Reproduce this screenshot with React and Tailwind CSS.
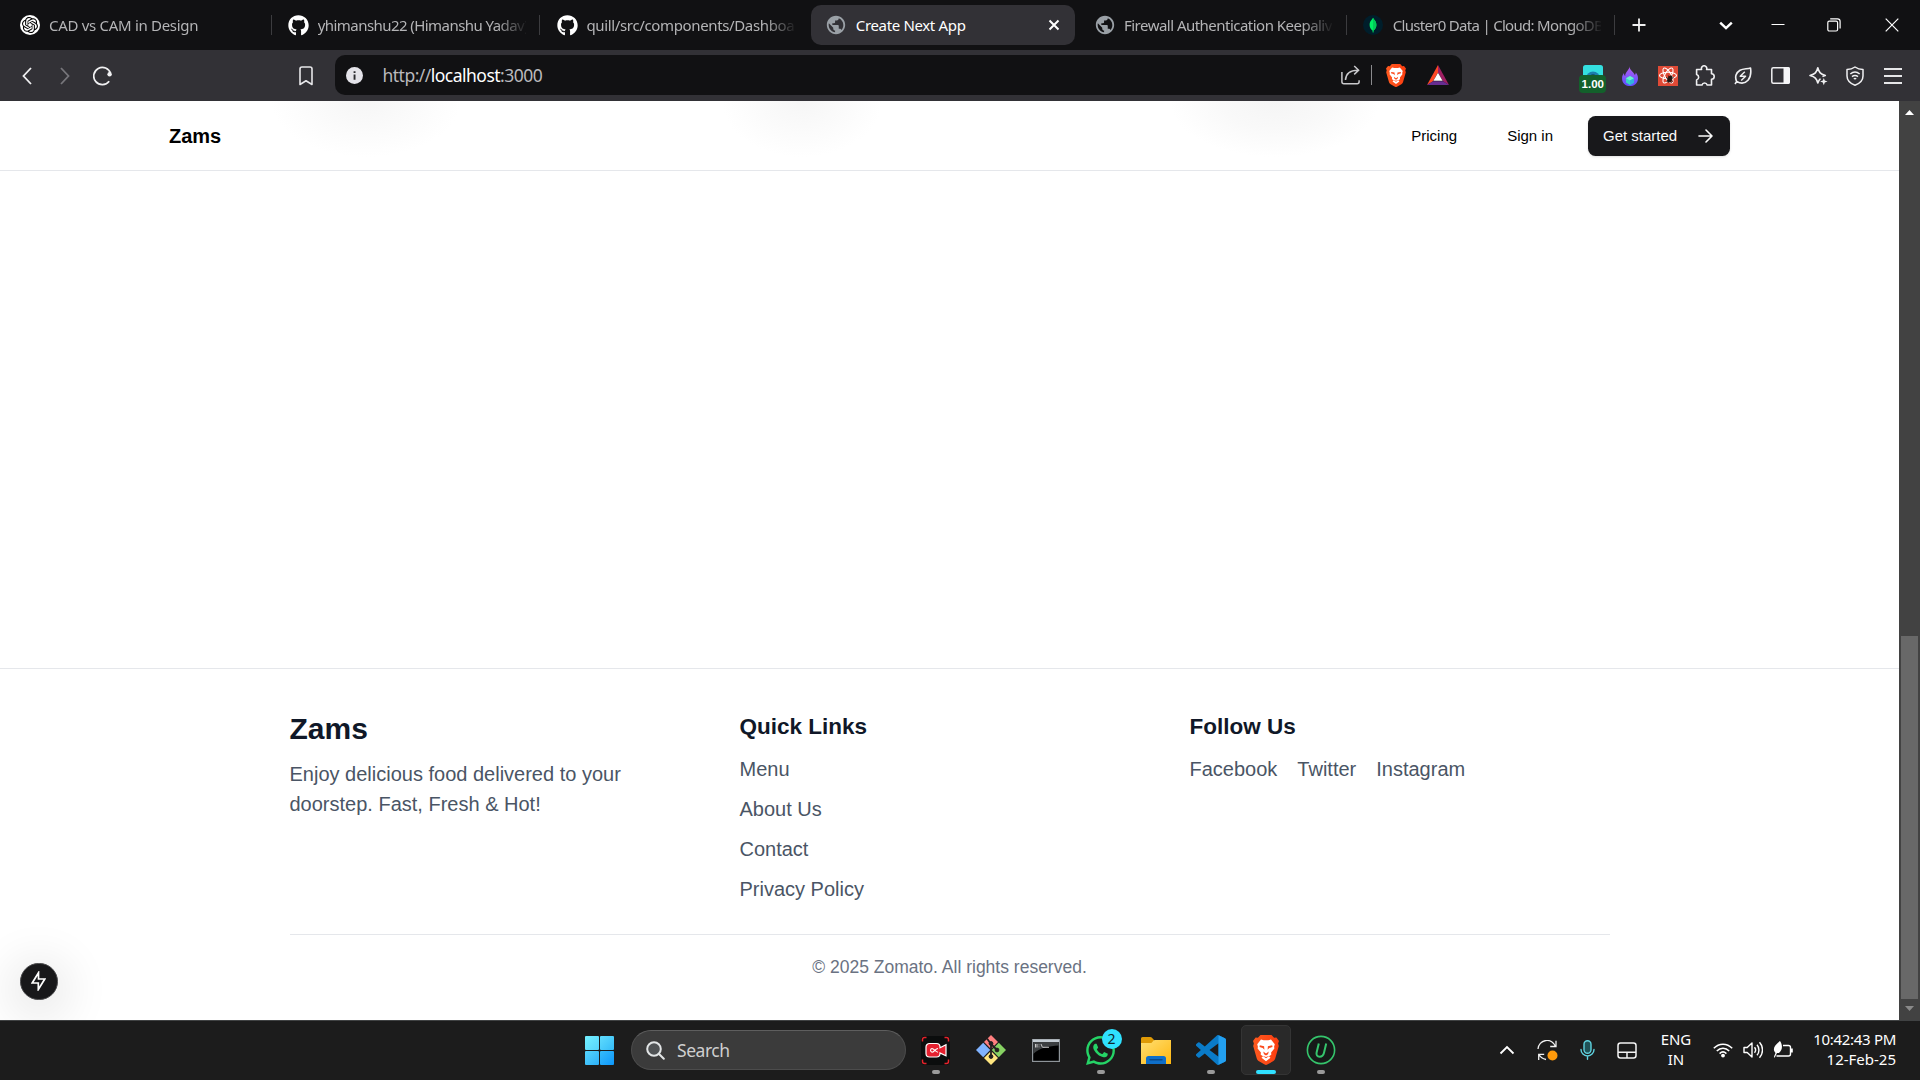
import React from "react";
import { FaGithub, FaWhatsapp } from "react-icons/fa";
import { MdPublic } from "react-icons/md";
import { SiOpenai } from "react-icons/si";

const UI = "font-['Noto_Sans','Open_Sans',sans-serif]";

function Lion({ className }) {
  return (
    <svg className={className} viewBox="0 0 26 30">
      <defs>
        <linearGradient id="lion" x1="0" y1="0" x2="1" y2="0">
          <stop offset="0" stopColor="#ff5a1f" />
          <stop offset="1" stopColor="#fb3d10" />
        </linearGradient>
      </defs>
      <path d="M7.500 0h11l2.600 2.800 2.300-.3L26 6l-.9 2.600.7 2.300-3.500 12.300c-.4 1.500-1.200 2.300-2.300 3.100l-5.700 3.300c-.8.500-1.800.5-2.600 0L6 26.300c-1.100-.8-1.900-1.600-2.300-3.100L.2 10.900l.7-2.300L0 6l2.600-3.500 2.300.3z" fill="url(#lion)" />
      <path d="M8 4.600l2.700.7h4.600l2.700-.7 3.800 4.600-.7 2.600.3 1.600-3.300 4.200.2 2.200-2.300 1.400 1.500 1.500-4.500 3.500-4.500-3.500L10 21.200l-2.300-1.400.2-2.200-3.300-4.200.3-1.600-.7-2.600z" fill="#fff" />
      <path d="M6.800 10.300l4.300.9.300 3.600-1.700-1.900-3.200-.9zM19.200 10.300l-4.300.9-.3 3.600 1.700-1.900 3.200-.9zM10.200 16.600l2.800 2 2.800-2-.8 2.600-2 1.300-2-1.300zM9.500 20.800l3.500 1.200 3.500-1.200-3.500 2.500z" fill="#fb4b1e" />
    </svg>
  );
}

function OpenAiIcon() {
  return (
    <span className="flex h-5 w-5 items-center justify-center rounded-full bg-white">
      <SiOpenai className="h-4 w-4 text-black" />
    </span>
  );
}

function GithubIcon() {
  return <FaGithub className="h-[21px] w-[21px] text-white" />;
}

function GlobeIcon() {
  return <MdPublic className="h-[22px] w-[22px] shrink-0 text-[#9aa0a6]" />;
}

function MongoIcon() {
  return (
    <svg className="h-5 w-5" viewBox="0 0 20 20">
      <circle cx="10" cy="10" r="10" fill="#001e2b" />
      <path d="M10 2.800C10.600 4.400 13.400 6 13.400 10c0 3-1.700 4.800-2.900 5.600L10.300 17.500h-.6L9.500 15.600C8.300 14.800 6.600 13 6.600 10 6.600 6 9.400 4.400 10 2.800z" fill="#00ed64" />
      <path d="M10 2.800V17.500h.3l.2-1.900c1.200-.8 2.900-2.600 2.900-5.600 0-4-2.800-5.600-3.400-7.200z" fill="#00c957" />
    </svg>
  );
}

const tabs = [
  { title: "CAD vs CAM in Design", Icon: OpenAiIcon, sep: true, track: "tracking-[-0.3px]" },
  { title: "yhimanshu22 (Himanshu Yadav)", Icon: GithubIcon, sep: true, track: "tracking-[-0.56px]" },
  { title: "quill/src/components/Dashboard", Icon: GithubIcon, track: "tracking-[-0.36px]" },
  { title: "Create Next App", Icon: GlobeIcon, active: true, track: "tracking-[-0.34px]" },
  { title: "Firewall Authentication Keepalive", Icon: GlobeIcon, sep: true, track: "tracking-[-0.52px]" },
  { title: "Cluster0 Data | Cloud: MongoDB", Icon: MongoIcon, sep: true, track: "tracking-[-0.7px]" },
];

function Tab({ title, Icon, sep, active, track }) {
  return (
    <div className="flex h-full w-[268.750px] shrink-0 items-center">
      <div
        className={
          "flex h-10 shrink-0 items-center rounded-[10px] " +
          (active ? "ml-px w-[264px] bg-[#323136] pl-[14.500px] text-white" : "w-[265px] pl-[15px] text-[#b4b4b6]")
        }
      >
        <span className="flex w-[21px] shrink-0 items-center justify-center">
          <Icon />
        </span>
        <span
          className={
            "mb-px ml-[9px] flex-1 overflow-hidden whitespace-nowrap text-[15px] leading-5 " +
            track +
            (active ? "" : " mr-[12px] [mask-image:linear-gradient(to_right,black_178px,transparent_210px)]")
          }
        >
          {title}
        </span>
        {active && (
          <svg className="mr-[15px] h-3 w-3" viewBox="0 0 12 12" stroke="#fff" strokeWidth="2">
            <path d="M1.500 1.500l9 9M10.500 1.500l-9 9" />
          </svg>
        )}
      </div>
      {sep && <span className="ml-[1.500px] h-5 w-px bg-[#3c3c3f]" />}
    </div>
  );
}

function TabStrip() {
  return (
    <div className="flex h-[50px] shrink-0 items-center bg-[#111113] pl-[4px]">
      {tabs.map((t) => (
        <Tab key={t.title} {...t} />
      ))}
      <svg className="ml-[15.500px] h-[14px] w-[14px]" viewBox="0 0 14 14" stroke="#f0f0f0" strokeWidth="1.800">
        <path d="M7 .5v13M.5 7h13" />
      </svg>
      <svg className="ml-[73px] h-[14px] w-[14px]" viewBox="0 0 14 14" fill="none" stroke="#fff" strokeWidth="2.400">
        <path d="M1.200 4.600L7 10.200l5.800-5.600" />
      </svg>
      <svg className="mb-[3px] ml-[37.500px] h-[14px] w-[14px]" viewBox="0 0 14 14" stroke="#fff" strokeWidth="1">
        <path d="M.5 7.500h13" />
      </svg>
      <svg className="mb-px ml-[42px] h-[14px] w-[14px]" viewBox="0 0 14 14" fill="none" stroke="#fff" strokeWidth="1.200">
        <rect x=".8" y="3.200" width="9.800" height="9.800" rx="1.500" />
        <path d="M3.200 .9h7.300a2.600 2.600 0 0 1 2.600 2.600v7" />
      </svg>
      <svg className="mb-px ml-[44px] h-[14px] w-[14px]" viewBox="0 0 14 14" stroke="#fff" strokeWidth="1.200">
        <path d="M.7.700l12.600 12.600M13.300.700L.7 13.300" />
      </svg>
    </div>
  );
}

function BatIcon() {
  return (
    <svg className="h-5 w-[22px]" viewBox="0 0 22 20">
      <path d="M11 0L0 20l6-3.800L11 7.500z" fill="#ff4724" />
      <path d="M11 0l11 20-6-3.800L11 7.500z" fill="#9e1f63" />
      <path d="M0 20h22l-6-3.800H6z" fill="#662d91" />
      <path d="M11 7.800l4.600 8H6.400z" fill="#fff" />
    </svg>
  );
}

function Cell({ children }) {
  return <div className="flex h-full w-[37.500px] shrink-0 items-center justify-center">{children}</div>;
}

function Toolbar() {
  return (
    <div className="flex h-[51px] shrink-0 items-center bg-[#323136]">
      <svg className="ml-[22px] h-[18px] w-[10px]" viewBox="0 0 10 18" fill="none" stroke="#f0f0f2" strokeWidth="1.800">
        <path d="M9 1L1.500 9 9 17" />
      </svg>
      <svg className="ml-[28px] h-[18px] w-[10px]" viewBox="0 0 10 18" fill="none" stroke="#77767b" strokeWidth="1.800">
        <path d="M1 1l7.500 8L1 17" />
      </svg>
      <svg className="ml-[23px] h-5 w-5" viewBox="0 0 20 20" fill="none" stroke="#f0f0f2" strokeWidth="1.700">
        <path d="M16.200 15.200A8.600 8.600 0 1 1 17.600 7.600" />
        <circle cx="16.600" cy="8.300" r="2.200" fill="#f0f0f2" stroke="none" />
      </svg>
      <svg className="ml-[186px] h-5 w-[14px]" viewBox="0 0 14 20" fill="none" stroke="#e6e6e9" strokeWidth="1.600" strokeLinejoin="round">
        <path d="M1 18.500V3a2 2 0 0 1 2-2h8a2 2 0 0 1 2 2v15.500L7 14.800z" />
      </svg>
      <div className="mb-px ml-[22px] flex h-10 w-[1127px] shrink-0 items-center rounded-[10px] bg-[#111113] pl-[11px]">
        <svg className="mt-px h-[17px] w-[17px] shrink-0" viewBox="0 0 17 17">
          <circle cx="8.500" cy="8.500" r="8.500" fill="#e4e3e9" />
          <path d="M7.600 7.400h1.900v5.400H7.600zM7.600 4.200h1.900V6H7.600z" fill="#2a2a2e" />
        </svg>
        <div className="mb-px ml-[19.500px] flex-1 whitespace-nowrap text-[17.500px] leading-6 tracking-[-0.520px] text-[#b9b9bd]">
          http://<span className="text-white">localhost</span>:3000
        </div>
        <svg className="h-5 w-[19px] shrink-0" viewBox="0 0 19 20" fill="none" stroke="#c9c9cc" strokeWidth="1.500">
          <path d="M.9 7v9.800a2 2 0 0 0 2 2h13.200a2 2 0 0 0 2-2v-1.500" />
          <path d="M4.500 15C4.800 9 8 5.200 17 5.200M13.200 1l4.400 4.200-4.400 4.200" />
        </svg>
        <span className="ml-[11px] h-5 w-px shrink-0 bg-[#8a8a8d]" />
        <Lion className="ml-[14px] h-[23px] w-5 shrink-0" />
        <span className="ml-[21.500px] mr-[13px]">
          <BatIcon />
        </span>
      </div>
      <div className="flex h-full flex-1 items-center justify-end pr-[8.500px]">
        <Cell>
          <div className="relative mb-[11px] flex h-[10px] w-5 justify-center overflow-visible">
            <svg className="h-[14px] w-5 shrink-0" viewBox="0 0 20 14">
              <path d="M0 14V2.500A2.500 2.500 0 0 1 2.500 0h15A2.500 2.500 0 0 1 20 2.500V14z" fill="#34dfe0" />
              <circle cx="10" cy="13.500" r="7" fill="#1b7fae" />
              <circle cx="10" cy="14" r="4.500" fill="#123" />
            </svg>
            <span className="absolute left-[-3.500px] top-[10px] h-[18px] w-[27px] rounded-[4px] bg-[#13602b] text-center font-['Liberation_Sans',sans-serif] text-[11.500px] font-bold leading-[18px] text-white">
              1.00
            </span>
          </div>
        </Cell>
        <Cell>
          <svg className="h-5 w-4" viewBox="0 0 16 20">
            <defs>
              <linearGradient id="flame" x1="0" y1="0" x2="0" y2="1">
                <stop offset="0" stopColor="#b45cf0" />
                <stop offset="1" stopColor="#5b52ff" />
              </linearGradient>
            </defs>
            <path d="M7.500 0C7.400 4.500 12 5.500 12.800 9c.6-.6 1-1.500 1-2.500C16 9 16.300 12 15.700 14.500 14.800 18 12 20 8 20s-6.900-2-7.700-5.500C-.3 11.500.3 9 2 7c0 1.500.3 2.300 1.200 3C3 6 7.800 4 7.500 0z" fill="url(#flame)" />
            <path d="M8 10l4 2.200v4.300L8 19l-4-2.500v-4.300z" fill="#36d6c4" />
            <path d="M8 10l4 2.200L8 14.500l-4-2.300z" fill="#6df0d0" />
            <path d="M8 14.500l4-2.300v4.300L8 19z" fill="#30b3e0" />
          </svg>
        </Cell>
        <Cell>
          <svg className="h-5 w-5" viewBox="0 0 20 20">
            <rect width="20" height="20" fill="#e04a36" />
            <g fill="none" stroke="#fff" strokeWidth="1.100">
              <ellipse cx="10" cy="9.500" rx="8.500" ry="3.200" />
              <ellipse cx="10" cy="9.500" rx="8.500" ry="3.200" transform="rotate(60 10 9.500)" />
              <ellipse cx="10" cy="9.500" rx="8.500" ry="3.200" transform="rotate(120 10 9.500)" />
            </g>
            <g fill="#1e1512" stroke="#1e1512" strokeWidth=".9">
              <ellipse cx="11.800" cy="13" rx="1.700" ry="3.300" transform="rotate(25 11.800 13)" />
              <path d="M8 11.500l7 4M8.500 15.500l7-4M10.300 9.500l3 7.500" />
            </g>
          </svg>
        </Cell>
        <Cell>
          <svg className="h-[22px] w-[22px]" viewBox="0 0 22 22" fill="none" stroke="#f0f0f2" strokeWidth="1.600" strokeLinejoin="round">
            <path d="M3 4.500h4.600a2.700 2.700 0 1 1 5 0H17.500v4.300a2.700 2.700 0 1 1 0 5.400V20h-4.300a2.700 2.700 0 0 0-5.200 0H2.600v-5a2.800 2.800 0 0 0 0-5.400V4.500z" />
          </svg>
        </Cell>
        <Cell>
          <svg className="h-[18px] w-[18px]" viewBox="0 0 18 18" fill="none" stroke="#f0f0f2" strokeWidth="1.600" strokeLinejoin="round">
            <path d="M2.700 14.500C.5 10 2 5.500 6 3.200 9 1.600 13 2 16.500 1c.8 5 .3 9-2.500 12.200-3 3.300-7.500 3.500-11.300 1.300L1 17" />
            <path d="M10.800 4.800L6.200 9.300h5.400L7.200 13.600" strokeWidth="1.400" />
          </svg>
        </Cell>
        <Cell>
          <svg className="h-[17px] w-[19px]" viewBox="0 0 19 17">
            <rect x=".8" y=".8" width="17.400" height="15.400" rx="1.500" fill="none" stroke="#f0f0f2" strokeWidth="1.500" />
            <path d="M12.500 0H17a2 2 0 0 1 2 2v13a2 2 0 0 1-2 2h-4.500z" fill="#f6f6f8" />
          </svg>
        </Cell>
        <Cell>
          <svg className="h-5 w-5" viewBox="0 0 20 20" fill="none" stroke="#f0f0f2" strokeWidth="1.600" strokeLinejoin="round">
            <path d="M12.500 12.700c-1.300.7-1.900 2-2.700 4.300-1.300-4.700-2.600-6-7.800-7.500 5.200-1.500 6.500-2.800 7.800-7.800 1.300 5 2.600 6.300 7.500 7.800-1.200.4-2.100.7-2.800 1.100" />
            <path d="M15.800 12l1 2.600 2.700 1-2.700 1-1 2.700-1-2.700-2.700-1 2.700-1z" fill="#f0f0f2" stroke="none" />
          </svg>
        </Cell>
        <Cell>
          <svg className="h-5 w-[18px]" viewBox="0 0 18 20" fill="none" stroke="#f0f0f2" strokeWidth="1.500" strokeLinejoin="round">
            <path d="M9 1c2.500 1.800 5 2.500 8 2.500V10c0 4.500-3.500 7.500-8 9.200C4.500 17.500 1 14.500 1 10V3.500C4 3.500 6.500 2.800 9 1z" />
            <path d="M4.300 8c2.800-2.400 6.600-2.400 9.400 0M6 10.700c1.800-1.500 4.200-1.500 6 0M7.800 13c.7-.5 1.700-.5 2.400 0" />
          </svg>
        </Cell>
        <Cell>
          <span className="flex w-[18px] flex-col gap-[5px]">
            <span className="h-[2px] bg-[#e6e6e8]" />
            <span className="h-[2px] bg-[#e6e6e8]" />
            <span className="h-[2px] bg-[#e6e6e8]" />
          </span>
        </Cell>
      </div>
    </div>
  );
}

function Navbar() {
  return (
    <nav className="relative flex h-[70px] items-center justify-between overflow-hidden border-b border-gray-200 bg-white pl-[169px] pr-[169px]">
      <div className="absolute left-[271px] top-[-56px] h-[112px] w-[190px] bg-[radial-gradient(closest-side,#f6f6f6_0%,#fafafa_45%,#ffffff_100%)]" />
      <div className="absolute left-[722px] top-[-56px] h-[112px] w-[160px] bg-[radial-gradient(closest-side,#f6f6f6_0%,#fafafa_45%,#ffffff_100%)]" />
      <div className="absolute left-[1170px] top-[-56px] h-[112px] w-[210px] bg-[radial-gradient(closest-side,#f5f5f5_0%,#f9f9f9_50%,#ffffff_100%)]" />
      <span className="relative text-[20px] font-bold leading-7 text-black">Zams</span>
      <div className="relative flex items-center text-[15px] leading-5 text-black">
        <span>Pricing</span>
        <span className="ml-[50px]">Sign in</span>
        <span className="ml-[35px] flex h-10 w-[142px] items-center rounded-[7.500px] bg-[#18181b] pl-[15px] text-[#fafafa] shadow-sm">
          Get started
          <svg className="ml-[21px] h-[14px] w-[15px]" viewBox="0 0 15 14" fill="none" stroke="#fafafa" strokeWidth="1.600" strokeLinecap="round" strokeLinejoin="round">
            <path d="M1 7h13M8 1l6 6-6 6" />
          </svg>
        </span>
      </div>
    </nav>
  );
}

function Footer() {
  return (
    <footer className="border-t border-gray-200 bg-white py-10">
      <div className="mx-auto w-[1320px]">
        <div className="grid grid-cols-3 gap-[30px] text-[20px] leading-[30px] text-gray-600">
          <div>
            <h2 className="text-[30px] font-bold leading-10 text-gray-900">Zams</h2>
            <p className="mt-[10px] w-[360px]">Enjoy delicious food delivered to your doorstep. Fast, Fresh &amp; Hot!</p>
          </div>
          <div>
            <h3 className="text-[22.500px] font-bold leading-[35px] text-gray-900">Quick Links</h3>
            <ul className="mt-[10px] flex flex-col gap-[10px]">
              <li>Menu</li>
              <li>About Us</li>
              <li>Contact</li>
              <li>Privacy Policy</li>
            </ul>
          </div>
          <div>
            <h3 className="text-[22.500px] font-bold leading-[35px] text-gray-900">Follow Us</h3>
            <div className="mt-[10px] flex gap-5">
              <span>Facebook</span>
              <span>Twitter</span>
              <span>Instagram</span>
            </div>
          </div>
        </div>
        <div className="mt-[30px] border-t border-gray-200 pt-5 text-center text-[17.500px] leading-[25px] text-gray-500">
          © 2025 Zomato. All rights reserved.
        </div>
      </div>
    </footer>
  );
}

function Scrollbar() {
  return (
    <div className="flex w-[21px] shrink-0 flex-col items-center bg-[#424242]">
      <svg className="mt-[9px] h-[5px] w-[9px]" viewBox="0 0 9 5">
        <path d="M4.500 0L9 5H0z" fill="#fff" />
      </svg>
      <div className="mt-[521px] h-[363px] w-[17px] bg-[#686868]" />
      <svg className="mt-[7px] h-[5px] w-[9px]" viewBox="0 0 9 5">
        <path d="M4.500 5L9 0H0z" fill="#8a8a8a" />
      </svg>
    </div>
  );
}

function Task({ children, active, running }) {
  return (
    <div className="flex h-full w-[55px] items-center justify-center">
      <div
        className={
          "relative flex h-[50px] w-[50px] items-center justify-center rounded-[5px] border " +
          (active ? "border-[#343434] bg-[#292929]" : "border-transparent")
        }
      >
        {children}
        {active && <span className="absolute bottom-0 h-1 w-5 rounded-full bg-[#30e0ff]" />}
        {running && <span className="absolute bottom-0 h-1 w-2 rounded-full bg-[#9a9a9a]" />}
      </div>
    </div>
  );
}

function Taskbar() {
  return (
    <div className="flex h-[60px] shrink-0 items-center border-t border-[#404243] bg-[#1c1c1c] pb-px">
      <div className="ml-[585px] grid h-[29px] w-[29px] shrink-0 grid-cols-2 gap-px">
        <span className="rounded-[1px] bg-linear-to-br from-[#73f0ff] to-[#55d3fb]" />
        <span className="rounded-[1px] bg-linear-to-br from-[#5fdcfd] to-[#34bcf8]" />
        <span className="rounded-[1px] bg-linear-to-br from-[#55d5fd] to-[#2cb0f8]" />
        <span className="rounded-[1px] bg-linear-to-br from-[#35bbfa] to-[#0b97fb]" />
      </div>
      <div className="ml-[17px] flex h-10 w-[275px] shrink-0 items-center rounded-full border border-[#4c4c4c] border-t-[#5e5e5e] bg-[#3b3b3b] pl-[14px]">
        <svg className="h-[19px] w-[19px]" viewBox="0 0 19 19" fill="none" stroke="#e2e5e6" strokeWidth="2">
          <circle cx="8" cy="8" r="6.800" fill="#505355" />
          <path d="M12.800 12.800l5 5" strokeLinecap="round" />
        </svg>
        <span className="ml-[12px] text-[17.500px] leading-6 tracking-[-0.450px] text-[#cfcfcf]">Search</span>
      </div>
      <div className="ml-[2px] flex h-full items-center">
        <Task running>
          <svg className="h-[29px] w-[29px]" viewBox="0 0 29 29">
            <rect width="29" height="29" rx="4" fill="#0b0d0d" />
            <path d="M1.500 5.500v-2a2 2 0 0 1 2-2h2M23.500 1.500h2a2 2 0 0 1 2 2v2M27.500 23.500v2a2 2 0 0 1-2 2h-2M5.500 27.500h-2a2 2 0 0 1-2-2v-2" fill="none" stroke="#e5232b" strokeWidth="1.500" />
            <path d="M8.500 7.500h7a3.500 3.500 0 0 1 3.500 3.500v.8l6-3v11l-6-2.800v.5a3.500 3.500 0 0 1-3.500 3.500h-7A3.500 3.500 0 0 1 5 17.500V11a3.500 3.500 0 0 1 3.500-3.500z" fill="#e5202f" stroke="#fff" strokeWidth="1.200" />
            <path d="M17 12.500c-2.500 0-4 3.700-6 3.700a1.900 1.900 0 0 1 0-3.700c2 0 3.500 3.700 6 3.700" fill="none" stroke="#fff" strokeWidth="1.100" />
          </svg>
        </Task>
        <Task>
          <svg className="h-[30px] w-[30px]" viewBox="0 0 30 30">
            <path d="M15 0l7 7-7 7-7-7z" fill="#ff7f7f" />
            <path d="M7.200 7.800l7 7.200-7 7.200L0 15z" fill="#80b3ff" />
            <path d="M22.800 7.800L30 15l-7.200 7.200-7-7.200z" fill="#87d263" />
            <path d="M15 16l7 7-7 7-7-7z" fill="#ffe680" />
            <g fill="#231f20" stroke="#231f20">
              <path d="M11 3.500l4 5.500v13M15 9l6 6" fill="none" strokeWidth="1.800" />
              <circle cx="15" cy="8.500" r="1.900" />
              <circle cx="15" cy="21.500" r="1.900" />
              <circle cx="21" cy="15" r="1.900" />
            </g>
          </svg>
        </Task>
        <Task>
          <svg className="h-[23px] w-[28px]" viewBox="0 0 28 23">
            <rect x=".6" y=".6" width="26.800" height="21.800" fill="#000" stroke="#8e9499" strokeWidth="1.200" />
            <path d="M1 .5h26v2.500H1z" fill="#c4ccd3" />
            <path d="M1.200 3h25.600v3.500C17 7 8 8.500 1.200 15z" fill="#3c3f41" />
            <path d="M3.500 5v3.500M5 5v3.500M7 5.500v.8M7 7.500v.8M9 5l1.500 3.500M11 8.300h6" stroke="#d8d8d8" fill="none" strokeWidth=".9" />
          </svg>
        </Task>
        <Task running>
          <FaWhatsapp className="h-[33px] w-[33px] text-[#25d366]" />
          <span className="absolute right-[3px] top-[3px] flex h-5 w-5 items-center justify-center rounded-full bg-[#2fe2ff] text-[14px] leading-5 text-[#10272c]">
            2
          </span>
        </Task>
        <Task>
          <svg className="h-[27px] w-[30px]" viewBox="0 0 30 27">
            <defs>
              <linearGradient id="folder" x1="0" y1="0" x2="1" y2="1">
                <stop offset="0" stopColor="#ffdf73" />
                <stop offset="1" stopColor="#ffb70f" />
              </linearGradient>
            </defs>
            <path d="M0 1.500A1.500 1.500 0 0 1 1.500 0h7.800c.6 0 1 .2 1.400.6L13 3v5H0z" fill="#df9a06" />
            <path d="M0 6h9.500c.6 0 1-.2 1.400-.6L12.500 3.600c.3-.4.8-.6 1.300-.6H30v24H0z" fill="url(#folder)" />
            <path d="M5 27v-5.500A2.500 2.500 0 0 1 7.500 19h15a2.500 2.500 0 0 1 2.500 2.500V27z" fill="#0f6fc9" />
            <path d="M9 22.800h12" stroke="#0a4a8c" strokeWidth="1.400" strokeLinecap="round" />
          </svg>
        </Task>
        <Task running>
          <svg className="h-[30px] w-[30px]" viewBox="0 0 24 24">
            <path d="M23.150 2.587L18.210.210a1.494 1.494 0 0 0-1.705.290l-9.460 8.630-4.120-3.128a.999.999 0 0 0-1.276.057L.327 7.261A1 1 0 0 0 .326 8.740L3.899 12 .326 15.260a1 1 0 0 0 .001 1.479L1.650 17.940a.999.999 0 0 0 1.276.057l4.120-3.128 9.460 8.630a1.492 1.492 0 0 0 1.704.290l4.942-2.377A1.500 1.500 0 0 0 24 20.060V3.939a1.500 1.500 0 0 0-.850-1.352zm-5.146 14.861L10.826 12l7.178-5.448v10.896z" fill="#0a7bc8" />
            <path d="M18 .2l5.150 2.387A1.500 1.500 0 0 1 24 3.940v16.120a1.500 1.500 0 0 1-.850 1.353L18 23.800z" fill="#23a0f0" />
          </svg>
        </Task>
        <Task active>
          <Lion className="h-[30px] w-[26px]" />
        </Task>
        <Task running>
          <svg className="h-[30px] w-[30px]" viewBox="0 0 30 30" fill="none">
            <circle cx="15" cy="15" r="13.600" fill="#161a18" stroke="#35c56c" strokeWidth="1.600" />
            <path d="M12.800 8.500l-2.200 9c-.6 2.500.6 4.200 3 4.200s3.800-1.500 4.400-4l2.200-9.200" stroke="#35c56c" strokeWidth="2" />
          </svg>
        </Task>
      </div>
      <div className="ml-auto flex h-full items-center pr-[24px] text-white">
        <svg className="h-[10px] w-[16px]" viewBox="0 0 16 10" fill="none" stroke="#fff" strokeWidth="1.800">
          <path d="M1.500 8.500L8 2l6.500 6.500" />
        </svg>
        <svg className="ml-[22px] h-[21px] w-[21px]" viewBox="0 0 21 21" fill="none" stroke="#f0f0f0" strokeWidth="1.300">
          <path d="M1 9A9 9 0 0 1 18.500 6.500M19 .8V6.500h-5.800M1.700 20v-5.700h5.500M2 14.500c1.300 2.500 3.500 4.300 7 5" />
          <circle cx="15.500" cy="15.500" r="5" fill="#ff9a0b" stroke="none" />
        </svg>
        <svg className="ml-[22px] h-5 w-[15px]" viewBox="0 0 15 20" fill="none" stroke="#5fd3e0" strokeWidth="1.400" strokeLinecap="round">
          <rect x="4" y=".8" width="7" height="12.500" rx="3.500" fill="#1f5257" />
          <path d="M1 9.500a6.500 6.500 0 0 0 13 0M7.500 16v3.300" />
        </svg>
        <svg className="ml-[22px] h-[17px] w-5" viewBox="0 0 20 17" fill="none" stroke="#f4f4f4" strokeWidth="1.500">
          <rect x="1" y="1" width="18" height="15" rx="2.500" />
          <path d="M1 10.300h18M10 10.300V16" />
        </svg>
        <div className="mb-[2px] ml-[19px] w-[40px] text-center text-[15px] leading-5 tracking-[-0.100px]">
          ENG
          <br />
          IN
        </div>
        <svg className="ml-[17px] h-[16px] w-5" viewBox="0 0 20 16" fill="none" stroke="#fff" strokeWidth="1.500">
          <path d="M.8 6.200c5.200-5.400 13.200-5.400 18.400 0M3.800 9c3.500-3.700 8.900-3.700 12.400 0M6.600 11.600c2-2 4.800-2 6.800 0" />
          <circle cx="10" cy="13.600" r="1.900" fill="#fff" stroke="none" />
        </svg>
        <svg className="ml-[10px] h-[18px] w-5" viewBox="0 0 20 18" fill="none" stroke="#fff" strokeWidth="1.400" strokeLinejoin="round">
          <path d="M1 6.500h3.200L9 2v14l-4.800-4.500H1z" />
          <path d="M11.500 6.200c1.300 1.600 1.300 4 0 5.600M14 3.700c2.600 3 2.600 7.600 0 10.600M16.500 1.300c4 4.400 4 11 0 15.400" />
        </svg>
        <svg className="ml-[10px] h-[18px] w-5" viewBox="0 0 20 18" fill="none" stroke="#fff" strokeWidth="1.400">
          <path d="M10 4.500h5.500a2 2 0 0 1 2 2V13a2 2 0 0 1-2 2H3.500" />
          <path d="M18.800 7.500v4" strokeWidth="2" />
          <path d="M7 0c2.500 3.500 3 8.500-1 12H4l-2.500 5L1 15.500 2.500 12C-1 8 1.500 4.500 7 0z" fill="#fff" stroke="none" />
        </svg>
        <div className="mb-[2px] ml-[18px] w-[85px] whitespace-nowrap text-right text-[15px] leading-5 tracking-[-0.300px]">
          10:42:43 PM
          <br />
          <span className="tracking-[0px]">12-Feb-25</span>
        </div>
      </div>
    </div>
  );
}

export default function App() {
  return (
    <div className={"flex h-[1080px] w-[1920px] flex-col overflow-hidden " + UI}>
      <TabStrip />
      <Toolbar />
      <div className="flex h-[919px] shrink-0 bg-white">
        <div className="relative flex flex-1 flex-col overflow-hidden font-['Liberation_Sans',Arial,sans-serif]">
          <Navbar />
          <main className="flex-1 bg-white" />
          <Footer />
          <button className="absolute bottom-5 left-5 flex h-[37.500px] w-[37.500px] items-center justify-center rounded-full border border-[#4a4a4c] bg-[#18181a] shadow-[0_8px_46px_12px_rgba(0,0,0,0.090)]">
            <svg className="h-5 w-[15px]" viewBox="0 0 15 20" fill="none" stroke="#fff" strokeWidth="1.700">
              <path d="M7.500 1.800L1.200 12h6.100v6.500L13.800 8H7.500z" />
            </svg>
          </button>
        </div>
        <Scrollbar />
      </div>
      <Taskbar />
    </div>
  );
}
